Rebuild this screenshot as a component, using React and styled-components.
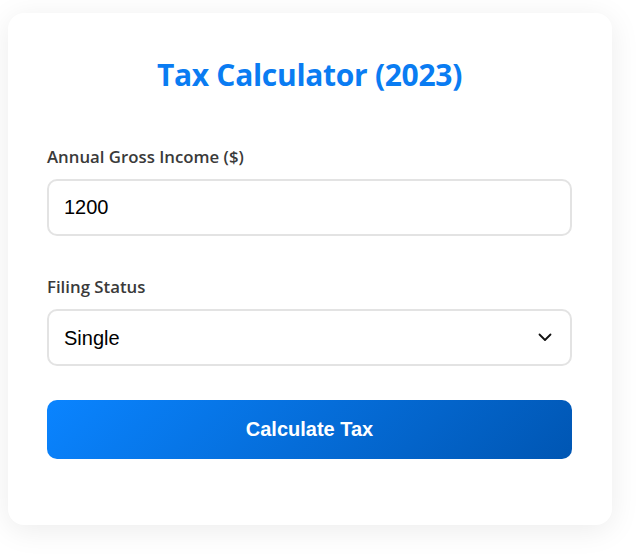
import React, { useState } from "react";
import styled, { createGlobalStyle } from "styled-components";

const GlobalStyle = createGlobalStyle`
  html, body {
    margin: 0;
    padding: 0;
    background: #ffffff;
  }
  body {
    font-family: "Open Sans", "Noto Sans", sans-serif;
  }
`;

const Page = styled.div`
  padding: 13px 29px 32px 8px;
`;

const Card = styled.div`
  width: 604px;
  box-sizing: border-box;
  background: #ffffff;
  border-radius: 16px;
  padding: 40px 40px 66px 39px;
  box-shadow: 0 5px 30px rgba(0, 0, 0, 0.08);
`;

const Title = styled.h1`
  margin: 2px 0 51px;
  font-family: "Open Sans", "Noto Sans", sans-serif;
  font-size: 30px;
  line-height: 40px;
  font-weight: 700;
  color: #0a7cf2;
  text-align: center;
  letter-spacing: -0.3px;
`;

const Form = styled.form`
  display: flex;
  flex-direction: column;
`;

const Group = styled.div`
  display: flex;
  flex-direction: column;
  margin-bottom: ${(p) => p.$spacing}px;
`;

const Label = styled.label`
  font-family: "Open Sans", "Noto Sans", sans-serif;
  font-size: 16.8px;
  line-height: 22px;
  font-weight: 600;
  color: #3a3a3a;
  margin-bottom: 11px;
`;

const fieldCss = `
  width: 100%;
  box-sizing: border-box;
  height: 57px;
  padding: 15px;
  border: 2px solid #e3e3e3;
  border-radius: 10px;
  background: #ffffff;
  font-family: "Liberation Sans", Arial, sans-serif;
  font-size: 20px;
  color: #000000;
  outline: none;
`;

const Input = styled.input`
  ${fieldCss}
`;

const SelectWrap = styled.div`
  position: relative;
`;

const Select = styled.select`
  ${fieldCss}
  appearance: none;
  -webkit-appearance: none;
  padding-right: 40px;
`;

const Chevron = styled.svg`
  position: absolute;
  right: 20px;
  top: 24px;
  width: 14px;
  height: 9px;
  pointer-events: none;
`;

const Button = styled.button`
  height: 59px;
  border: none;
  border-radius: 10px;
  background: linear-gradient(135deg, #0a84ff 0%, #0056b3 100%);
  color: #ffffff;
  font-family: "Liberation Sans", Arial, sans-serif;
  font-size: 20px;
  font-weight: 700;
  cursor: pointer;
`;

export default function App() {
  const [income, setIncome] = useState("1200");
  const [status, setStatus] = useState("single");
  return (
    <Page>
      <GlobalStyle />
      <Card>
        <Title>Tax Calculator (2023)</Title>
        <Form onSubmit={(e) => e.preventDefault()}>
          <Group $spacing={40}>
            <Label htmlFor="income">Annual Gross Income ($)</Label>
            <Input
              id="income"
              type="text"
              value={income}
              onChange={(e) => setIncome(e.target.value)}
            />
          </Group>
          <Group $spacing={34}>
            <Label htmlFor="status">Filing Status</Label>
            <SelectWrap>
              <Select
                id="status"
                value={status}
                onChange={(e) => setStatus(e.target.value)}
              >
                <option value="single">Single</option>
                <option value="married">Married Filing Jointly</option>
                <option value="separate">Married Filing Separately</option>
                <option value="head">Head of Household</option>
              </Select>
              <Chevron viewBox="0 0 14 9" fill="none">
                <polyline
                  points="1.5,1.5 7,7 12.5,1.5"
                  stroke="#111"
                  strokeWidth="1.8"
                  strokeLinecap="round"
                  strokeLinejoin="round"
                />
              </Chevron>
            </SelectWrap>
          </Group>
          <Button type="submit">Calculate Tax</Button>
        </Form>
      </Card>
    </Page>
  );
}
